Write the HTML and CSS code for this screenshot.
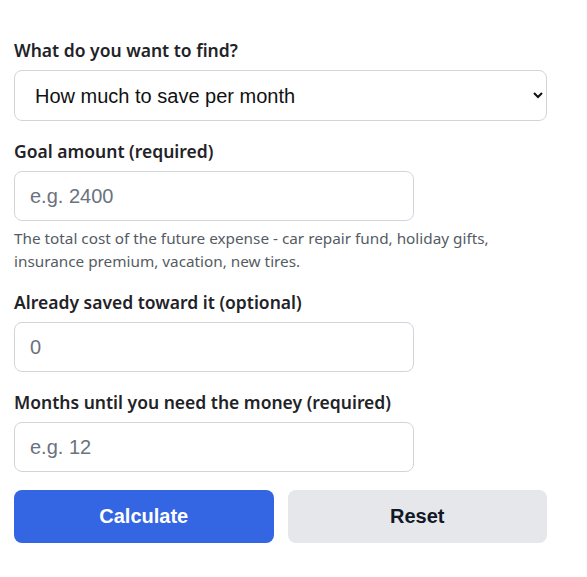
FILE: index.html
```html
<!DOCTYPE html>
<html lang="en">

<head>
    <meta charset="UTF-8">
    <meta name="viewport" content="width=device-width, initial-scale=1.0">
    <title>Savings goal calculator</title>
    <link rel="stylesheet" href="styles.css">
</head>

<body>
    <form class="calc">
        <div class="field">
            <label for="mode">What do you want to find?</label>
            <select id="mode" class="select">
                <option>How much to save per month</option>
                <option>How long it will take</option>
            </select>
        </div>
        <div class="field">
            <label for="goal">Goal amount (required)</label>
            <input id="goal" class="input" type="text" placeholder="e.g. 2400">
            <p class="hint">The total cost of the future expense - car repair fund, holiday gifts, insurance premium, vacation, new tires.</p>
        </div>
        <div class="field">
            <label for="saved">Already saved toward it (optional)</label>
            <input id="saved" class="input" type="text" placeholder="0">
        </div>
        <div class="field">
            <label for="months">Months until you need the money (required)</label>
            <input id="months" class="input" type="text" placeholder="e.g. 12">
        </div>
        <div class="actions">
            <button type="button" class="btn btn-primary">Calculate</button>
            <button type="reset" class="btn btn-light">Reset</button>
        </div>
    </form>
</body>

</html>
```

FILE: styles.css
```css
body {
    margin: 0;
    background-color: #fff;
    font-family: "Noto Sans", "Open Sans", sans-serif;
    color: #1f2328;
}

.calc {
    width: 533px;
    padding: 38px 0 0 14px;
}

.field {
    display: flex;
    flex-direction: column;
    margin-bottom: 18px;
}

.field label {
    font-size: 17.5px;
    font-weight: 600;
    line-height: 24px;
    margin-bottom: 8px;
}

.select,
.input {
    box-sizing: border-box;
    height: 50px;
    border: 1px solid #d1d5db;
    border-radius: 8px;
    background-color: #fff;
    font-family: "Liberation Sans", Arial, sans-serif;
    font-size: 20px;
    color: #111;
}

.select {
    width: 533px;
    height: 51px;
    padding: 0 12px 0 16px;
}

.input {
    width: 400px;
    padding: 0 15px;
}

.input::placeholder {
    color: #6b7280;
}

.hint {
    margin: 6px 0 0;
    font-size: 15.3px;
    line-height: 22.5px;
    color: #555b63;
}

.actions {
    display: flex;
    gap: 14px;
}

.btn {
    flex: 1;
    height: 53px;
    border: none;
    border-radius: 8px;
    font-family: "Liberation Sans", Arial, sans-serif;
    font-size: 20px;
    font-weight: bold;
}

.btn-primary {
    background-color: #3465e3;
    color: #fff;
}

.btn-light {
    background-color: #e5e7eb;
    color: #111827;
}
```
